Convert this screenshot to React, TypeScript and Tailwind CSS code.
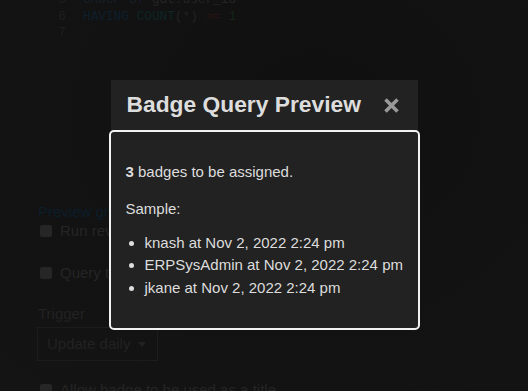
import React from "react";

const sans = { fontFamily: '"Liberation Sans", Arial, sans-serif' };
const mono = { fontFamily: '"Liberation Mono", "Courier New", monospace' };

function Check({ label, className = "" }: { label: string; className?: string }) {
  return (
    <div className={`flex items-center gap-[8px] whitespace-nowrap ${className}`}>
      <span className="w-[12px] h-[12px] rounded-[2px] bg-[#262626] shrink-0" />
      <span className="text-[15px] text-[#252525]">{label}</span>
    </div>
  );
}

export default function App() {
  return (
    <div className="relative w-[528px] h-[391px] overflow-hidden bg-[#121212]" style={sans}>
      {/* background page */}
      <div className="absolute inset-0 pointer-events-none bg-[radial-gradient(ellipse_at_60%_30%,#101010_0%,#121212_50%,#141414_100%)]" />
      <div className="relative">
        <div className="flex flex-col text-[12.75px] leading-[16.5px] mt-[-8px]" style={mono}>
          <div className="flex">
            <span className="w-[66px] text-right text-[#1f1f1f]">5</span>
            <span className="ml-[17px]">
              <span className="text-[#161e28]">GROUP BY</span>
              <span className="text-[#242424]"> gdt.user_id</span>
            </span>
          </div>
          <div className="flex">
            <span className="w-[66px] text-right text-[#1f1f1f]">6</span>
            <span className="ml-[17px]">
              <span className="text-[#0e1f2c]">HAVING</span>
              <span className="text-[#222222]"> </span>
              <span className="text-[#0e2624]">COUNT</span>
              <span className="text-[#222222]">(*) </span>
              <span className="text-[#2c1212]">&gt;=</span>
              <span className="text-[#222222]"> </span>
              <span className="text-[#142616]">1</span>
            </span>
          </div>
          <div className="flex">
            <span className="w-[66px] text-right text-[#1f1f1f]">7</span>
          </div>
        </div>

        <div className="ml-[38px] mt-[161px] flex flex-col">
          <div className="text-[15px] leading-[18px] text-[#0c1e2a] whitespace-nowrap">Preview granted badges</div>
          <Check label="Run revocation query daily" className="ml-[2px] mt-[-1px]" />
          <Check label="Query targets posts" className="ml-[2px] mt-[20px]" />
          <div className="text-[15px] text-[#222222] mt-[18px]">Trigger</div>
          <div className="mt-[2px] w-[121px] h-[34px] border border-[#1c1c1c] flex items-center pl-[9px] text-[15px] text-[#222222] ml-[-1px]">
            Update daily
            <span className="ml-[8px] w-0 h-0 border-l-[4px] border-r-[4px] border-t-[5px] border-l-transparent border-r-transparent border-t-[#222222]" />
          </div>
          <Check label="Allow badge to be used as a title" className="ml-[2px] mt-[18px]" />
        </div>
      </div>

      {/* modal */}
      <div className="absolute inset-0 flex justify-center pt-[80px]">
        <div className="w-[307px] h-fit flex flex-col bg-[#222222]">
          <div className="h-[50px] flex items-center justify-between pl-[16px] pr-[18px]">
            <h3 className="text-[22.8px] font-bold text-[#dddddd] leading-none mt-[-1px] whitespace-nowrap">Badge Query Preview</h3>
            <svg width="17" height="17" viewBox="0 0 17 17" className="mt-[1px]">
              <path d="M2.5 2.5 L14.5 14.5 M14.5 2.5 L2.5 14.5" stroke="#999999" strokeWidth="3.6" strokeLinecap="butt" />
            </svg>
          </div>
          <div className="-mx-[2px] border-2 border-[#f2f2f2] rounded-[5px] bg-[#222222] pl-[15px] pr-[8px] pt-[29px] pb-[29px] text-[15px] leading-[22.5px] text-[#dddddd]">
            <p>
              <b>3</b> badges to be assigned.
            </p>
            <p className="mt-[14.5px]">Sample:</p>
            <ul className="mt-[11px] list-disc pl-[19px] whitespace-nowrap">
              <li>knash at Nov 2, 2022 2:24 pm</li>
              <li>ERPSysAdmin at Nov 2, 2022 2:24 pm</li>
              <li>jkane at Nov 2, 2022 2:24 pm</li>
            </ul>
          </div>
        </div>
      </div>
    </div>
  );
}
